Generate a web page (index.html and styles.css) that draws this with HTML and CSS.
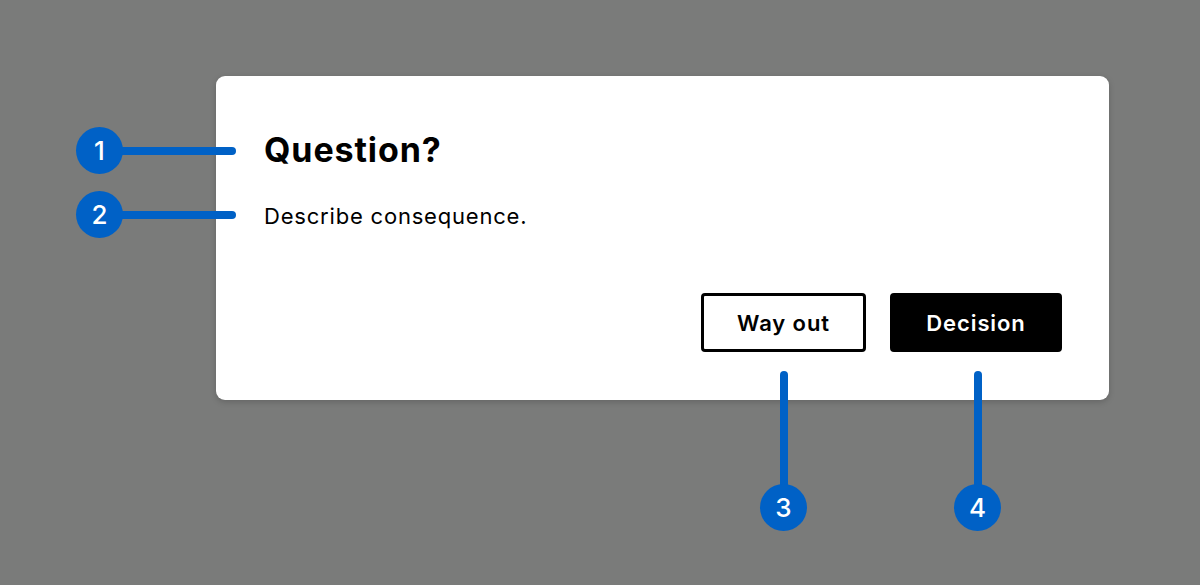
FILE: index.html
```html
<!DOCTYPE html>
<html>
<head>
<meta charset="utf-8">
<link rel="stylesheet" href="styles.css">
</head>
<body>
<div class="stage">
  <div class="dialog">
    <h1 class="title">Question?</h1>
    <p class="desc">Describe consequence.</p>
    <div class="actions">
      <button class="btn btn-secondary">Way out</button>
      <button class="btn btn-primary">Decision</button>
    </div>
  </div>
  <div class="callout callout-h c1"><span class="dot">1</span><span class="line"></span></div>
  <div class="callout callout-h c2"><span class="dot">2</span><span class="line"></span></div>
  <div class="callout callout-v c3"><span class="line"></span><span class="dot">3</span></div>
  <div class="callout callout-v c4"><span class="line"></span><span class="dot">4</span></div>
</div>
</body>
</html>
```
FILE: styles.css
```css
* { box-sizing: border-box; }
html, body {
  margin: 0;
  padding: 0;
  width: 1200px;
  height: 585px;
  overflow: hidden;
  background: #7a7b7a;
  font-family: Inter, "Noto Sans", sans-serif;
}
.stage {
  position: relative;
  width: 1200px;
  height: 585px;
  padding: 76px 0 0 216px;
}
.dialog {
  width: 893px;
  height: 324px;
  background: #fff;
  border-radius: 9px;
  box-shadow: 0 2px 6px rgba(0,0,0,0.18);
  padding: 0 47px 48px 48px;
  display: flex;
  flex-direction: column;
}
.title {
  margin: 52px 0 0 0;
  font-size: 34px;
  line-height: 44px;
  font-weight: 700;
  color: #000;
  letter-spacing: 0.9px;
}
.desc {
  margin: 30px 0 0 0;
  font-size: 22px;
  line-height: 28px;
  color: #000;
  letter-spacing: 0.8px;
}
.actions {
  margin-top: auto;
  display: flex;
  justify-content: flex-end;
  gap: 24px;
}
.btn {
  height: 59px;
  padding: 0;
  font-family: Inter, "Noto Sans", sans-serif;
  font-size: 22px;
  font-weight: 600;
  letter-spacing: 0.9px;
  border-radius: 4px;
  cursor: pointer;
}
.btn-secondary {
  width: 165px;
  background: #fff;
  color: #000;
  border: 3px solid #000;
}
.btn-primary {
  width: 172px;
  background: #000;
  color: #fff;
  border: 3px solid #000;
}
.callout {
  position: absolute;
  display: flex;
  align-items: center;
}
.dot {
  width: 47px;
  height: 47px;
  border-radius: 50%;
  background: #0061c6;
  color: #fff;
  font-size: 26px;
  font-weight: 500;
  display: flex;
  align-items: center;
  justify-content: center;
  flex: none;
  position: relative;
  z-index: 1;
}
.callout-h .line {
  width: 119px;
  height: 8px;
  margin-left: -6px;
  background: #0061c6;
  border-radius: 0 4px 4px 0;
}
.callout-v { flex-direction: column; }
.callout-v .line {
  width: 8px;
  height: 119px;
  margin-bottom: -6px;
  background: #0061c6;
  border-radius: 4px 4px 0 0;
}
.c1 { left: 76px; top: 127px; }
.c2 { left: 76px; top: 191px; }
.c3 { left: 760px; top: 371px; }
.c4 { left: 954px; top: 371px; }
```
